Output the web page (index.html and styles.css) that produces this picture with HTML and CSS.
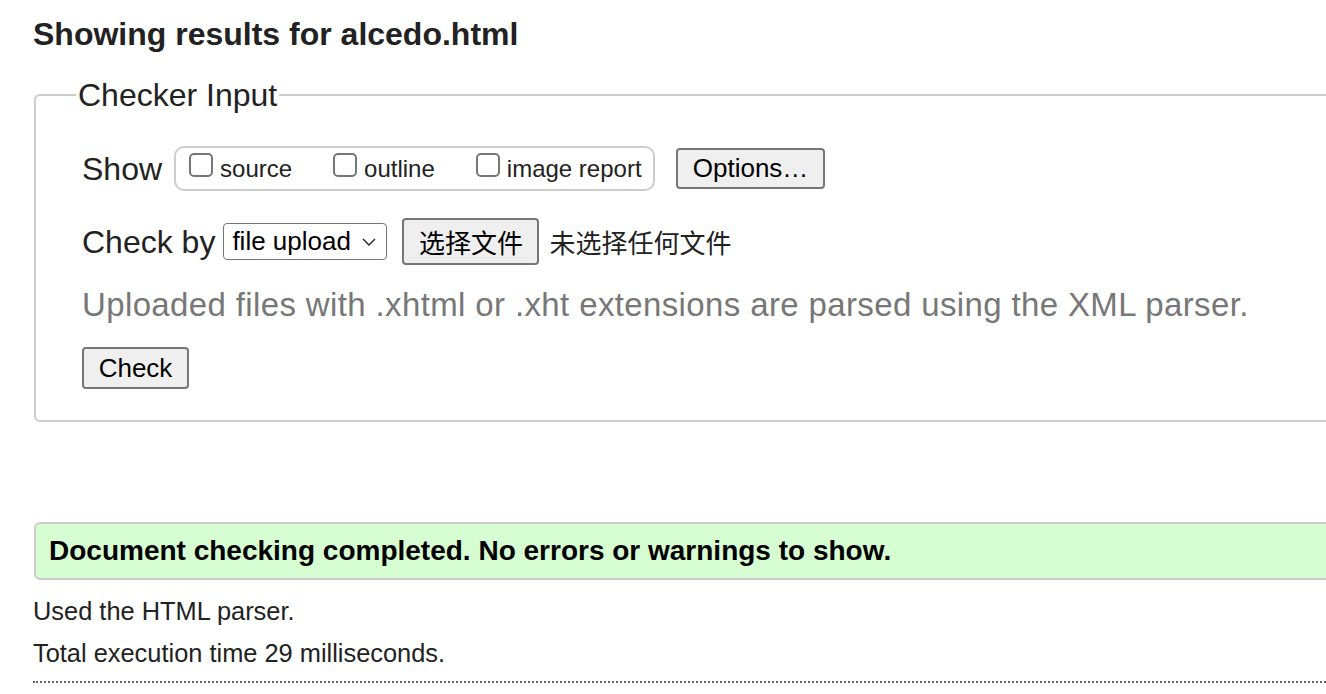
FILE: index.html
```html
<!DOCTYPE html>
<html lang="en">
<head>
<meta charset="utf-8">
<title>Showing results for alcedo.html</title>
<link rel="stylesheet" href="styles.css">
</head>
<body>
<div class="page">
  <h2 class="title">Showing results for alcedo.html</h2>
  <fieldset class="checker">
    <legend class="legend">Checker Input</legend>
    <div class="row row-show">
      <span class="label label-show">Show</span>
      <div class="group">
        <label class="opt"><input class="box" type="checkbox"><span>source</span></label>
        <label class="opt"><input class="box" type="checkbox"><span>outline</span></label>
        <label class="opt"><input class="box" type="checkbox"><span>image report</span></label>
      </div>
      <button class="btn btn-options" type="button">Options…</button>
    </div>
    <div class="row row-check">
      <span class="label label-check">Check by</span>
      <div class="select">
        <span>file upload</span>
        <svg class="chev" width="14" height="8" viewBox="0 0 14 8"><path d="M1 1 L7 7 L13 1" fill="none" stroke="#222" stroke-width="1.4"/></svg>
      </div>
      <button class="btn btn-file" type="button">选择文件</button>
      <span class="nofile">未选择任何文件</span>
    </div>
    <p class="hint">Uploaded files with .xhtml or .xht extensions are parsed using the XML parser.</p>
    <div class="row row-submit">
      <button class="btn btn-check" type="button">Check</button>
    </div>
  </fieldset>
  <div class="success">Document checking completed. No errors or warnings to show.</div>
  <p class="info info-first">Used the HTML parser.</p>
  <p class="info">Total execution time 29 milliseconds.</p>
  <hr class="dots">
</div>
</body>
</html>
```
FILE: styles.css
```css
html, body {
  margin: 0;
  padding: 0;
  overflow-x: hidden;
  background: #fff;
}
body {
  font-family: "Liberation Sans", "Noto Sans CJK SC", Arial, sans-serif;
  color: #222;
}
.page {
  padding-left: 33px;
  margin-right: -60px;
}
.title {
  margin: 0;
  padding-top: 15px;
  font-size: 32px;
  line-height: 38px;
  font-weight: bold;
}
.checker {
  margin: 23px 0 0 1px;
  border: 2px solid #ccc;
  border-radius: 6px;
  padding: 32px 0 31px 46px;
  min-width: 0;
}
.legend {
  padding: 0 2px;
  margin-left: -6px;
  font-size: 32px;
  line-height: 38px;
}
.row {
  display: flex;
  align-items: center;
}
.row-show {
  height: 45px;
}
.label {
  font-size: 32px;
  line-height: 38px;
  white-space: nowrap;
}
.label-show {
  margin-right: 12px;
}
.group {
  display: flex;
  align-items: center;
  height: 45px;
  width: 481px;
  box-sizing: border-box;
  border: 2px solid #ccc;
  border-radius: 10px;
  padding: 0 12px 0 13px;
}
.opt {
  display: flex;
  align-items: center;
  font-size: 24px;
  white-space: nowrap;
}
.opt + .opt {
  margin-left: 41px;
}
.box {
  appearance: none;
  -webkit-appearance: none;
  margin: 0 7px 7px 0;
  width: 24px;
  height: 24px;
  box-sizing: border-box;
  border: 2px solid #767676;
  border-radius: 5px;
  background: #fff;
}
.btn {
  font-family: inherit;
  font-size: 26px;
  color: #000;
  background: #efefef;
  border: 2px solid #767676;
  border-radius: 4px;
  padding: 0;
  box-sizing: border-box;
}
.btn-options {
  margin-left: 21px;
  width: 149px;
  height: 41px;
}
.row-check {
  margin-top: 27px;
  height: 47px;
}
.label-check {
  margin-right: 8px;
}
.select {
  display: flex;
  align-items: center;
  justify-content: space-between;
  width: 164px;
  height: 37px;
  box-sizing: border-box;
  border: 1.5px solid #767676;
  border-radius: 4px;
  padding: 0 10px 0 8px;
  font-size: 26px;
  color: #000;
  background: #fff;
  white-space: nowrap;
}
.chev {
  display: block;
}
.btn-file {
  margin-left: 15px;
  width: 137px;
  height: 47px;
  font-size: 26px;
}
.nofile {
  margin-left: 10px;
  font-size: 26px;
  white-space: nowrap;
}
.hint {
  margin: 21px 0 0;
  font-size: 33px;
  letter-spacing: 0.37px;
  line-height: 38px;
  color: #777;
  white-space: nowrap;
}
.row-submit {
  margin-top: 23px;
}
.btn-check {
  width: 107px;
  height: 42px;
}
.success {
  margin: 100px 0 0 1px;
  height: 58px;
  box-sizing: border-box;
  border: 2px solid #ccc;
  border-radius: 6px;
  background: #d6fcd1;
  padding-left: 13px;
  display: flex;
  align-items: center;
  font-weight: bold;
  font-size: 28px;
  color: #000;
  white-space: nowrap;
}
.info {
  margin: 0;
  font-size: 25.4px;
  line-height: 42px;
}
.info-first {
  margin-top: 10px;
}
.dots {
  margin: 7px 0 0;
  border: 0;
  border-top: 2px dotted #666;
  height: 0;
}
```
